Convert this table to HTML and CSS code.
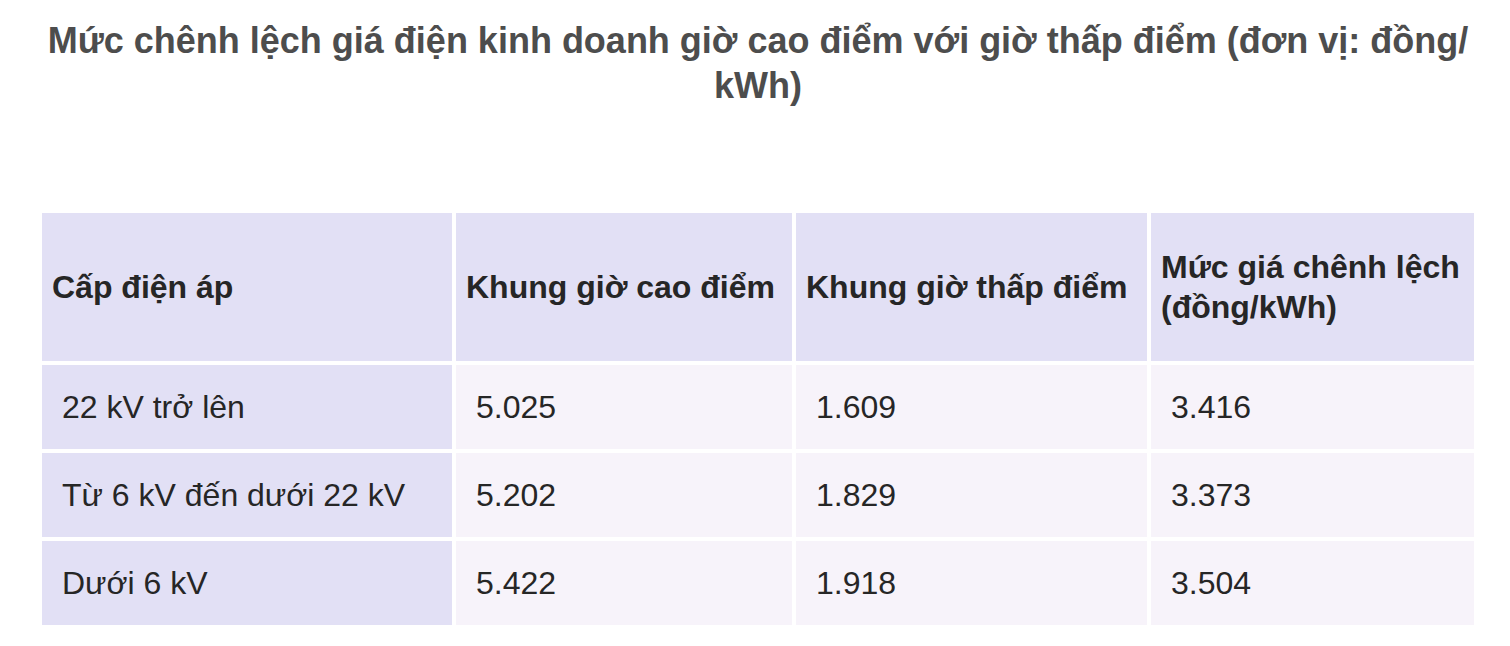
FILE: index.html
```html
<!DOCTYPE html>
<html lang="vi">
<head>
<meta charset="utf-8">
<title>Mức chênh lệch giá điện</title>
<link rel="stylesheet" href="styles.css">
</head>
<body>
<div class="page">
  <h1 class="title">Mức chênh lệch giá điện kinh doanh giờ cao điểm với giờ thấp điểm (đơn vị: đồng/<br>kWh)</h1>
  <table class="grid">
    <colgroup>
      <col class="c1"><col class="c2"><col class="c3"><col class="c4">
    </colgroup>
    <thead>
      <tr>
        <th>Cấp điện áp</th>
        <th>Khung giờ cao điểm</th>
        <th>Khung giờ thấp điểm</th>
        <th>Mức giá chênh lệch (đồng/kWh)</th>
      </tr>
    </thead>
    <tbody>
      <tr><td class="lead">22 kV trở lên</td><td>5.025</td><td>1.609</td><td>3.416</td></tr>
      <tr><td class="lead">Từ 6 kV đến dưới 22 kV</td><td>5.202</td><td>1.829</td><td>3.373</td></tr>
      <tr><td class="lead">Dưới 6 kV</td><td>5.422</td><td>1.918</td><td>3.504</td></tr>
    </tbody>
  </table>
</div>
</body>
</html>
```

FILE: styles.css
```css
html, body {
  margin: 0;
  padding: 0;
  background: #ffffff;
}
body {
  font-family: "Liberation Sans", Arial, Helvetica, sans-serif;
}
.page {
  width: 1440px;
  margin-left: 38px;
}
.title {
  margin: 18px 0 0;
  text-align: center;
  font-size: 36px;
  line-height: 45px;
  font-weight: bold;
  color: #4d4d4d;
}
.grid {
  margin-top: 101px;
  width: 1440px;
  table-layout: fixed;
  border-collapse: separate;
  border-spacing: 4px;
}
.c1 { width: 410px; }
.c2 { width: 336px; }
.c3 { width: 351px; }
.c4 { width: 323px; }
.grid th,
.grid td {
  font-size: 32px;
  line-height: 40px;
  color: #262626;
  text-align: left;
  vertical-align: middle;
}
.grid th {
  height: 148px;
  padding: 0 10px;
  box-sizing: border-box;
  background: #e2e0f5;
  font-weight: bold;
}
.grid td {
  height: 84px;
  padding: 0 10px 0 20px;
  box-sizing: border-box;
  background: #f7f3fa;
  font-weight: normal;
}
.grid td.lead {
  background: #e2e0f5;
}
```
